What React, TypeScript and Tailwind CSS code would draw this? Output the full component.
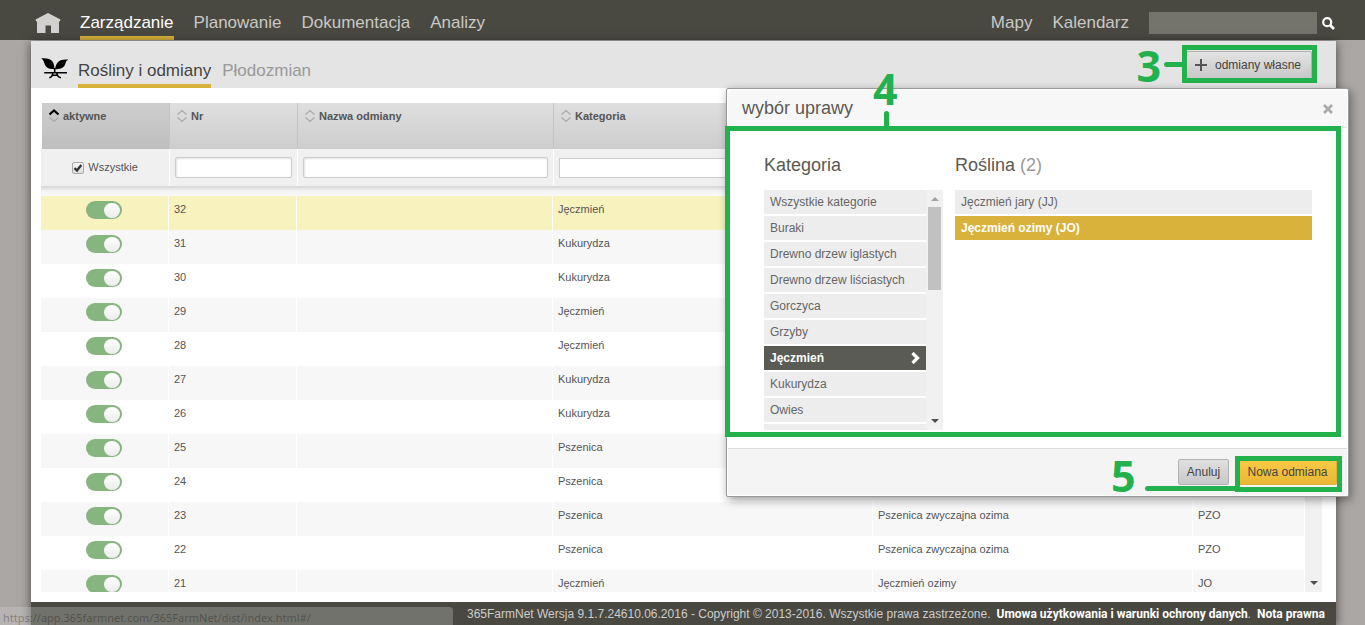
import React, { useState } from "react";

const rows = [
  { nr: 32, category: "Jęczmień", plant: "", code: "" },
  { nr: 31, category: "Kukurydza", plant: "", code: "" },
  { nr: 30, category: "Kukurydza", plant: "", code: "" },
  { nr: 29, category: "Jęczmień", plant: "", code: "" },
  { nr: 28, category: "Jęczmień", plant: "", code: "" },
  { nr: 27, category: "Kukurydza", plant: "", code: "" },
  { nr: 26, category: "Kukurydza", plant: "", code: "" },
  { nr: 25, category: "Pszenica", plant: "", code: "" },
  { nr: 24, category: "Pszenica", plant: "", code: "" },
  { nr: 23, category: "Pszenica", plant: "Pszenica zwyczajna ozima", code: "PZO" },
  { nr: 22, category: "Pszenica", plant: "Pszenica zwyczajna ozima", code: "PZO" },
  { nr: 21, category: "Jęczmień", plant: "Jęczmień ozimy", code: "JO" },
];

const categories = [
  "Wszystkie kategorie",
  "Buraki",
  "Drewno drzew iglastych",
  "Drewno drzew liściastych",
  "Gorczyca",
  "Grzyby",
  "Jęczmień",
  "Kukurydza",
  "Owies",
  "",
];

const plants = ["Jęczmień jary (JJ)", "Jęczmień ozimy (JO)"];

function HomeIcon() {
  return (
    <svg width="26" height="20" viewBox="0 0 26 20" fill="#d3d1d0" aria-hidden="true">
      <path d="M13 0 25.5 6.5 24.8 8.5H24V20H16V12.500H10.5V20H2V8.5H1.2L.5 6.5Z" />
    </svg>
  );
}

function PlantIcon() {
  return (
    <svg width="28" height="21" viewBox="0 0 28 21" aria-hidden="true">
      <path d="M0 0.500C5 0 9.500 .8 11.500 3.500 13 5.800 13.500 8.500 13.300 11 9.500 11 6 10.500 4.300 7.500 3 4.800 3 2 0 .5Z" />
      <path d="M27.300 1.500C22.500 1 18 2 16.200 5 15 7.200 14.200 9 14.200 11.200 18 11.300 21.500 10.500 23.300 8 24.800 6 24.300 3 27.300 1.500Z" />
      <path
        d="M13.700 10V14.500M3.200 14.800H26M11.800 14C11.800 17.500 10.500 19.400 8.300 19.700M15.800 14C15.800 17.500 17.500 19.400 20 19.700M11.500 17.200H16.200"
        fill="none"
        stroke="#000"
        strokeWidth="1.600"
      />
    </svg>
  );
}

function SortIcon({ active }: { active?: boolean }) {
  return (
    <svg width="10" height="14" viewBox="0 0 10 14" fill="none" aria-hidden="true">
      <path d="M.5 5.500 5 1.500 9.500 5.500" stroke={active ? "#000" : "#aaa"} strokeWidth={active ? 2.2 : 1.3} />
      <path d="M.5 8.500 5 12.500 9.500 8.500" stroke="#aaa" strokeWidth="1.300" />
    </svg>
  );
}

function ColumnHead({ label, active }: { label: string; active?: boolean }) {
  return (
    <th
      scope="col"
      aria-sort={active ? "ascending" : undefined}
      className={
        active
          ? "h-[46px] border-l border-white bg-linear-to-b from-[#cecece] to-[#bebebe] pt-1.5 pl-[7px] text-left align-top"
          : "h-[46px] border-l border-[#c4c4c4] bg-linear-to-b from-[#dfdfdf] to-[#cdcdcd] pt-1.5 pl-[7px] text-left align-top"
      }
    >
      <button type="button" className="flex items-center gap-1 text-[11px] leading-[14px] font-bold text-[#555]">
        <SortIcon active={active} />
        {label}
      </button>
    </th>
  );
}

function Arrow({ up }: { up?: boolean }) {
  return (
    <svg width="8" height="4" viewBox="0 0 8 4" fill={up ? "#a3a3a3" : "#505050"} aria-hidden="true">
      <path d={up ? "M0 4 4 0 8 4Z" : "M0 0H8L4 4Z"} />
    </svg>
  );
}

function VarietyTable() {
  const [enabled, setEnabled] = useState<Record<number, boolean>>({});
  const filter =
    "block h-[21px] w-full rounded-xs border border-[#ccc] bg-white px-1 text-[11px] shadow-[inset_1px_1px_2px_rgba(0,0,0,0.12)] outline-none";
  return (
    <div className="flex min-h-0 flex-1 overflow-hidden">
      <div className="min-w-0 flex-1 overflow-hidden">
        <table className="w-full table-fixed border-separate border-spacing-0 text-[11px] text-[#555]">
          <colgroup>
            <col className="w-32" />
            <col className="w-32" />
            <col className="w-64" />
            <col className="w-80" />
            <col className="w-80" />
            <col />
          </colgroup>
          <thead>
            <tr>
              <ColumnHead label="aktywne" active />
              <ColumnHead label="Nr" />
              <ColumnHead label="Nazwa odmiany" />
              <ColumnHead label="Kategoria" />
              <ColumnHead label="Roślina" />
              <ColumnHead label="Kod" />
            </tr>
            <tr className="h-[37px] bg-[#f0f0f0] [&>td]:pr-[5px] [&>td]:pl-[5px]">
              <td>
                <label className="flex items-center justify-center gap-1">
                  <span className="relative block h-3 w-3">
                    <input
                      type="checkbox"
                      defaultChecked
                      className="peer block h-3 w-3 appearance-none rounded-xs border border-[#aaa] bg-linear-to-b from-[#fafafa] to-[#ddd]"
                    />
                    <svg
                      className="pointer-events-none absolute inset-0 hidden peer-checked:block"
                      width="12"
                      height="12"
                      viewBox="0 0 12 12"
                      fill="none"
                      stroke="#333"
                      strokeWidth="2.400"
                      aria-hidden="true"
                    >
                      <path d="M2.500 6.200 5 8.500 9.300 3" />
                    </svg>
                  </span>
                  Wszystkie
                </label>
              </td>
              <td className="border-l border-white">
                <input aria-label="Nr" className={filter} />
              </td>
              <td className="border-l border-white">
                <input aria-label="Nazwa odmiany" className={filter} />
              </td>
              <td className="border-l border-white">
                <input aria-label="Kategoria" className="block h-5 w-full border border-[#ccc] bg-white px-1 outline-none" />
              </td>
              <td className="border-l border-white">
                <input aria-label="Roślina" className={filter} />
              </td>
              <td className="border-l border-white">
                <input aria-label="Kod" className={filter} />
              </td>
            </tr>
            <tr>
              <td colSpan={6} className="h-[10px] bg-linear-to-b from-[#d4d4d4] via-[#f4f4f4] via-50% to-[#fafafa] p-0" />
            </tr>
          </thead>
          <tbody>
            {rows.map((row, index) => (
              <tr
                key={row.nr}
                className={
                  (index === 0 ? "bg-[#f8f2be]" : index % 2 ? "bg-[#f7f7f7]" : "bg-white") +
                  " h-[34px] [&>td]:border-r [&>td]:border-white [&>td]:pt-[5px] [&>td]:pr-1.5 [&>td]:pl-[5px] [&>td]:align-top [&>td]:leading-4"
                }
              >
                <td>
                  <input
                    type="checkbox"
                    role="switch"
                    aria-label={"Odmiana " + row.nr}
                    checked={enabled[row.nr] ?? true}
                    onChange={(e) => setEnabled({ ...enabled, [row.nr]: e.target.checked })}
                    className="mx-auto flex h-[18px] w-9 appearance-none items-center justify-start rounded-full bg-[#bbb] px-0.5 before:block before:h-[15px] before:w-4 before:rounded-full before:bg-linear-to-b before:from-white before:to-[#ececec] checked:justify-end checked:bg-[#87b57f]"
                  />
                </td>
                <td>{row.nr}</td>
                <td />
                <td>{row.category}</td>
                <td>{row.plant}</td>
                <td>{row.code}</td>
              </tr>
            ))}
          </tbody>
        </table>
      </div>
      <div className="flex w-[17px] flex-col items-center justify-end bg-[#f1f1f1] pb-[7px]">
        <Arrow />
      </div>
    </div>
  );
}

function Marker({ children, className }: { children: React.ReactNode; className: string }) {
  return (
    <span
      className={
        "pointer-events-none absolute font-['Open_Sans',sans-serif] text-[43px] leading-[42px] font-bold text-[#22b14c] " + className
      }
    >
      {children}
    </span>
  );
}

function CropDialog() {
  const [category, setCategory] = useState("Jęczmień");
  const [plant, setPlant] = useState(plants[1]);
  return (
    <section
      role="dialog"
      aria-label="wybór uprawy"
      className="absolute top-[88px] right-4 w-[623px] rounded-xs border border-[#999] bg-white p-px shadow-[2px_3px_10px_rgba(0,0,0,0.4)]"
    >
      <header className="flex h-[38px] items-center justify-between rounded-t-md border-b border-[#e5e5e5] bg-[#f7f7f7] pr-3.5 pl-3.5">
        <h2 className="text-[18px] text-[#5a5953]">wybór uprawy</h2>
        <button type="button" aria-label="Zamknij">
          <svg width="10" height="10" viewBox="0 0 10 10" stroke="#aaa" strokeWidth="2.800" aria-hidden="true">
            <path d="M1 1 9 9M9 1 1 9" />
          </svg>
        </button>
      </header>

      <div className="flex h-80 gap-3 pt-[25px] pr-[35px] pl-9">
        <div>
          <h3 className="mb-[13px] text-[18px] leading-6 text-[#5a5953]">Kategoria</h3>
          <div className="flex h-60 overflow-hidden">
            <ul className="flex w-[162px] flex-col gap-0.5">
              {categories.map((name) => (
                <li key={name} className="flex">
                  <button
                    type="button"
                    onClick={() => setCategory(name)}
                    className={
                      name === category
                        ? "flex h-6 w-full items-center justify-between bg-[#5b5b55] px-1.5 text-left text-[12px] font-bold text-white"
                        : "flex h-6 w-full items-center justify-between bg-[#ededed] px-1.5 text-left text-[12px] text-[#666]"
                    }
                  >
                    {name}
                    {name === category && (
                      <svg width="9" height="12" viewBox="0 0 9 12" fill="none" stroke="#fff" strokeWidth="3.200" aria-hidden="true">
                        <path d="M1.500 1 6.500 6 1.500 11" />
                      </svg>
                    )}
                  </button>
                </li>
              ))}
            </ul>
            <div className="flex w-[17px] flex-col items-center bg-[#f1f1f1] pt-[7px] pb-[7px]">
              <Arrow up />
              <div className="mt-1.5 mb-auto h-[83px] w-[13px] bg-[#c1c1c1]" />
              <Arrow />
            </div>
          </div>
        </div>
        <div className="min-w-0 flex-1">
          <h3 className="mb-[13px] text-[18px] leading-6 text-[#5a5953]">
            Roślina <span className="text-[#999]">(2)</span>
          </h3>
          <ul className="flex flex-col gap-0.5">
            {plants.map((name) => (
              <li key={name} className="flex">
                <button
                  type="button"
                  onClick={() => setPlant(name)}
                  className={
                    name === plant
                      ? "h-6 w-full bg-[#d9b23b] px-1.5 text-left text-[12px] font-bold text-white"
                      : "h-6 w-full bg-[#ededed] px-1.5 text-left text-[12px] text-[#666]"
                  }
                >
                  {name}
                </button>
              </li>
            ))}
          </ul>
        </div>
      </div>

      <footer className="flex h-[47px] items-center justify-end gap-[9px] border-t border-[#ddd] bg-[#f4f4f4] pr-2.5">
        <button
          type="button"
          className="h-[26px] w-[51px] rounded-xs border border-[#b2b2b2] bg-linear-to-b from-[#e0e0e0] to-[#c8c8c8] text-[12px] text-[#444]"
        >
          Anuluj
        </button>
        <button
          type="button"
          className="h-[26px] w-[99px] rounded-xs border border-[#d9b23b] bg-linear-to-b from-[#f8ca44] to-[#e9b735] text-[12px] text-[#444]"
        >
          Nowa odmiana
        </button>
      </footer>

      <div className="pointer-events-none absolute top-[37px] -left-0.5 h-[311px] w-[616px] border-5 border-[#22b14c]" />
      <div className="pointer-events-none absolute top-[22px] left-[157px] h-4 w-[5px] rounded-t-full bg-[#22b14c]" />
      <Marker className="-top-[21px] left-[146px]">4</Marker>
      <div className="pointer-events-none absolute top-[367px] right-1.5 h-9 w-[107px] border-5 border-[#22b14c]" />
      <div className="pointer-events-none absolute top-[397px] right-[112px] h-[5px] w-[91px] rounded-l-full bg-[#22b14c]" />
      <Marker className="top-[366px] left-[384px]">5</Marker>
    </section>
  );
}

export default function App() {
  return (
    <div className="relative flex h-screen flex-col overflow-hidden bg-[#aba7a5] font-['Liberation_Sans',Arial,sans-serif]">
      <header className="flex h-10 shrink-0 items-stretch bg-[#4a4941] pl-[35px] text-[17px] text-[#c9c8c5]">
        <a href="#home" aria-label="Start" className="flex items-center pt-1.5 pr-[19px]">
          <HomeIcon />
        </a>
        <nav className="flex flex-1 gap-5">
          <a href="#zarzadzanie" className="border-b-4 border-[#d9b23b] pt-2.5 text-white">
            Zarządzanie
          </a>
          <a href="#planowanie" className="pt-2.5">
            Planowanie
          </a>
          <a href="#dokumentacja" className="pt-2.5">
            Dokumentacja
          </a>
          <a href="#analizy" className="pt-2.5">
            Analizy
          </a>
        </nav>
        <div className="flex gap-5 pr-[30px]">
          <a href="#mapy" className="pt-2.5">
            Mapy
          </a>
          <a href="#kalendarz" className="pt-2.5">
            Kalendarz
          </a>
          <form className="flex items-center gap-[5px] pt-1.5" role="search">
            <input aria-label="Szukaj" className="h-[22px] w-[168px] bg-[#74736c] px-1 text-[12px] outline-none" />
            <button type="button" aria-label="Szukaj">
              <svg width="13" height="13" viewBox="0 0 13 13" fill="none" stroke="#fff" aria-hidden="true">
                <circle cx="5.200" cy="5.200" r="4" strokeWidth="2.200" />
                <path d="M8.200 8.200 12 12" strokeWidth="2.800" />
              </svg>
            </button>
          </form>
        </div>
      </header>

      <main className="mt-px mr-[29px] ml-[31px] flex min-h-0 flex-1 flex-col bg-white shadow-[0_2px_10px_rgba(0,0,0,0.6)]">
        <div className="flex h-[47px] shrink-0 items-stretch bg-[#e4e4e4] pr-6 pl-2.5 text-[17px]">
          <div className="flex w-[37px] items-center pt-2">
            <PlantIcon />
          </div>
          <nav className="flex flex-1 gap-[11px]">
            <a href="#rosliny" className="border-b-4 border-[#d9b23b] pt-[17px] text-[#444]">
              Rośliny i odmiany
            </a>
            <a href="#plodozmian" className="pt-[17px] text-[#999]">
              Płodozmian
            </a>
          </nav>
          <div className="flex items-center">
            <button
              type="button"
              className="flex h-7 items-center gap-2 rounded-xs border border-[#b2b2b2] bg-linear-to-b from-[#e3e3e3] to-[#c8c8c8] pr-2.5 pl-2 text-[12px] text-[#444]"
            >
              <svg width="12" height="12" viewBox="0 0 12 12" stroke="#555" strokeWidth="2" aria-hidden="true">
                <path d="M6 0V12M0 6H12" />
              </svg>
              odmiany własne
            </button>
          </div>
        </div>
        <div className="flex min-h-0 flex-1 flex-col pt-[15px] pr-3.5 pb-2.5 pl-2.5">
          <VarietyTable />
        </div>
        <footer className="flex h-[23px] shrink-0 items-center justify-end gap-1.5 bg-[#4a4941] pr-[11px] text-[12px] whitespace-nowrap text-[#ccc]">
          <span>365FarmNet Wersja 9.1.7.24610.06.2016 - Copyright © 2013-2016. Wszystkie prawa zastrzeżone.</span>
          <span>
            <a href="#umowa" className="font-['Roboto','Liberation_Sans',sans-serif] font-bold text-white">
              Umowa użytkowania i warunki ochrony danych
            </a>
            .
          </span>
          <a href="#nota" className="font-['Roboto','Liberation_Sans',sans-serif] font-bold text-white">
            Nota prawna
          </a>
        </footer>
      </main>

      <div className="absolute top-[45px] right-12 h-[38px] w-[135px] border-5 border-[#22b14c]" />
      <div className="absolute top-[62px] right-[182px] h-[5px] w-[19px] rounded-l-full bg-[#22b14c]" />
      <Marker className="top-[45px] right-[204px]">3</Marker>

      <CropDialog />

      <div className="absolute bottom-0 left-0 h-[18px] w-[453px] rounded-tr-sm bg-[#d2d2d2]/30 pl-[3px] font-['Noto_Sans',sans-serif] text-[11px] leading-[22px] text-black/30">
        https://app.365farmnet.com/365FarmNet/dist/index.html#/
      </div>
    </div>
  );
}
